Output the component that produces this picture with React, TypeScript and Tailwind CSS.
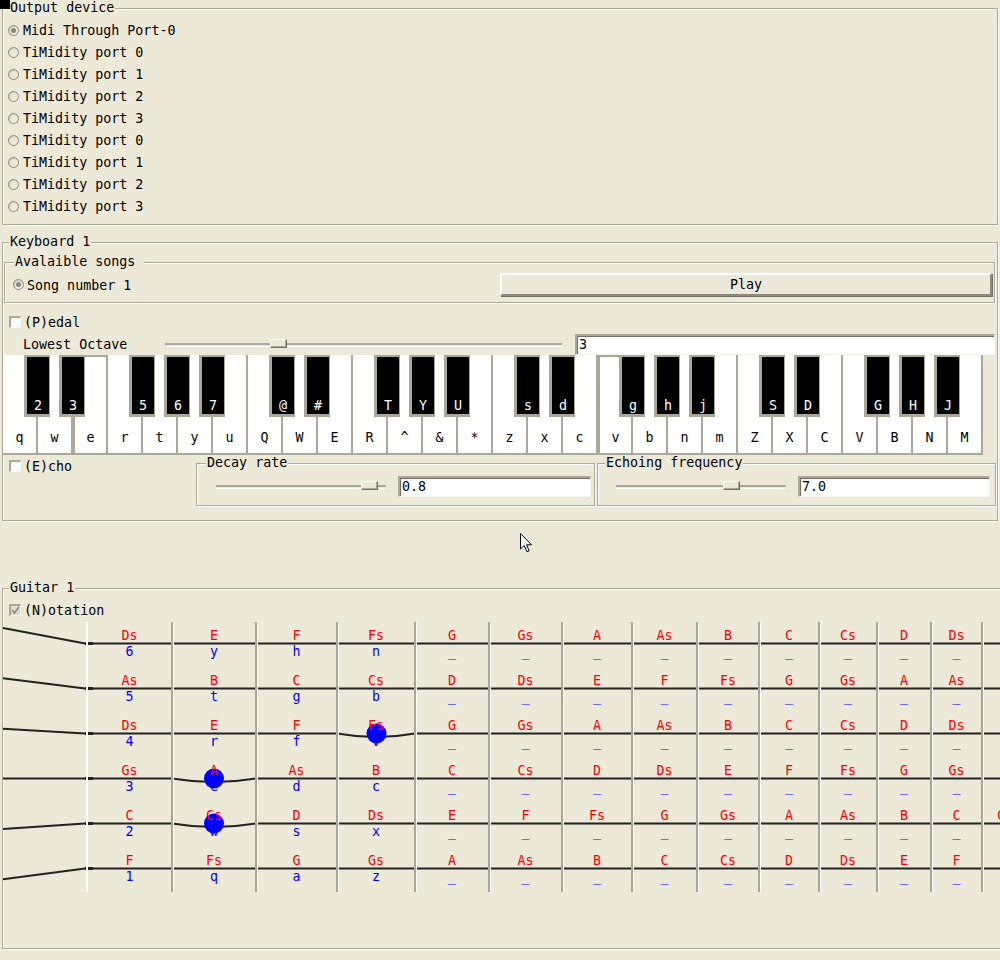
import React from "react";

const ports = [
  "Midi Through Port-0",
  "TiMidity port 0",
  "TiMidity port 1",
  "TiMidity port 2",
  "TiMidity port 3",
  "TiMidity port 0",
  "TiMidity port 1",
  "TiMidity port 2",
  "TiMidity port 3",
];

const whiteKeys = "q w e r t y u Q W E R ^ & * z x c v b n m Z X C V B N M".split(" ");
// boundary between white keys (px from piano left) and the label of the black key on it
const blackKeys: [number, string][] = [
  [35, "2"], [70, "3"], [140, "5"], [175, "6"], [210, "7"],
  [280, "@"], [315, "#"], [385, "T"], [420, "Y"], [455, "U"],
  [525, "s"], [560, "d"], [630, "g"], [665, "h"], [700, "j"],
  [770, "S"], [805, "D"], [875, "G"], [910, "H"], [945, "J"],
];

const scale = ["C", "Cs", "D", "Ds", "E", "F", "Fs", "G", "Gs", "A", "As", "B"];
const openNotes = [3, 10, 3, 8, 0, 5];
const keyCols = [
  ["6", "5", "4", "3", "2", "1"],
  ["y", "t", "r", "e", "w", "q"],
  ["h", "g", "f", "d", "s", "a"],
  ["n", "b", "v", "c", "x", "z"],
];
const fretWidths = ["w-[85px]", "w-[84px]", "w-[81px]", "w-[78px]", "w-[74px]", "w-[73px]", "w-[70px]", "w-[65px]", "w-[62px]", "w-[60px]", "w-[58px]", "w-[54px]", "w-[51px]", "w-[49px]"];

const Frame = ({
  label,
  className,
  labelClass = "left-[6px]",
  children,
}: {
  label: string;
  className: string;
  labelClass?: string;
  children?: React.ReactNode;
}) => (
  <div className={`relative border border-[#aca899] shadow-[inset_1px_1px_0_#fff,1px_1px_0_#fff] ${className}`}>
    <span className={`absolute -top-[9px] bg-[#ece9d8] px-[1px] leading-[16px] whitespace-pre ${labelClass}`}>{label}</span>
    {children}
  </div>
);

const Radio = ({ checked }: { checked?: boolean }) => (
  <span className="flex w-[11px] h-[11px] shrink-0 items-center justify-center rounded-full border border-[#8d8a7c] shadow-[inset_1px_1px_0_#cfcbbb]">
    {checked && <span className="w-[5px] h-[5px] rounded-full bg-[#8d8a7c]" />}
  </span>
);

const Check = ({ checked }: { checked?: boolean }) => (
  <span
    className={`flex w-[12px] h-[12px] shrink-0 items-center justify-center border-t-2 border-l-2 border-[#aca899] border-r border-b border-r-[#f6f5ee] border-b-[#f6f5ee] ${checked ? "bg-[#dedbcf]" : "bg-white"}`}
  >
    {checked && (
      <svg width="9" height="9" viewBox="0 0 9 9">
        <path d="M1 4 L3.5 7 L8 1" fill="none" stroke="#8d8a7c" strokeWidth="1.6" />
      </svg>
    )}
  </span>
);

const Entry = ({ value, className }: { value: string; className: string }) => (
  <div className={`h-[21px] bg-white border-t-2 border-l-2 border-[#aca899] border-r border-b border-r-[#f6f5ee] border-b-[#f6f5ee] shadow-[inset_1px_1px_0_#716f64] pl-[2px] leading-[18px] ${className}`}>
    {value}
  </div>
);

const Slider = ({ className, thumb }: { className: string; thumb: string }) => (
  <div className={`relative h-[4px] border-t-2 border-[#aca899] border-b border-b-white ${className}`}>
    <span className={`absolute -top-[6px] w-[17px] h-[9px] bg-[#ece9d8] border border-t-white border-l-white border-r-[#716f64] border-b-[#716f64] shadow-[inset_-1px_-1px_0_#aca899] ${thumb}`} />
  </div>
);

const Piano = () => (
  <div className="relative flex h-[100px] w-[980px]">
    {whiteKeys.map((k, i) => (
      <div
        key={i}
        className={`flex w-[35px] h-[100px] items-end justify-center bg-white border-r-2 border-b-2 border-[#aca899] pb-[7px] leading-[16px] ${
          i === 2 || i === 17 ? "border-t-2 border-l-2 border-t-[#aca899] border-l-[#aca899]" : ""
        }`}
      >
        {k}
      </div>
    ))}
    {blackKeys.map(([b, k]) => (
      <div
        key={b}
        className="absolute top-0 flex w-[26px] h-[62px] bg-[#aca899] pl-[3px] pr-[1px] pt-[2px] pb-[3px]"
        style={{ left: b - 14 }}
      >
        <div className="flex flex-1 items-end justify-center bg-black text-white leading-[16px]">{k}</div>
      </div>
    ))}
  </div>
);

const Strings = () => (
  <svg className="absolute left-0 top-0" width="1000" height="270">
    <g fill="none" stroke="#222" strokeWidth="2">
      <path d="M0 6 L82 21.5 H997" />
      <path d="M0 56.3 L82 66.5 H997" />
      <path d="M0 106.7 L82 111.5 H334 Q373.5 118.5 412 111.5 H997" />
      <path d="M0 156.5 H169 Q211 163.5 253 156.5 H997" />
      <path d="M0 207 L82 201.5 H169 Q211 208.5 253 201.5 H997" />
      <path d="M0 257.3 L82 246.5 H997" />
    </g>
    <g stroke="#222" strokeWidth="3">
      {[21.5, 66.5, 111.5, 156.5, 201.5, 246.5].map((y) => (
        <line key={y} x1="82" y1={y} x2="90" y2={y} />
      ))}
    </g>
    <g fill="#0000ff">
      <circle cx="373.5" cy="111.5" r="10" />
      <circle cx="211" cy="156.5" r="10" />
      <circle cx="211" cy="201.5" r="10" />
    </g>
  </svg>
);

const Fretboard = () => (
  <div className="relative h-[270px] w-[997px]">
    <Strings />
    <div className="relative flex h-[270px] pl-[83px]">
      {fretWidths.map((w, c) => (
        <div
          key={c}
          className={`flex h-[270px] shrink-0 flex-col border-l-2 ${w} ${c === 0 ? "border-white" : "border-[#a9a697] shadow-[inset_1px_0_0_#fff]"}`}
        >
          {c < 13 &&
            openNotes.map((o, r) => (
              <div key={r} className="flex h-[45px] flex-col items-center pt-[6px] leading-[16px]">
                <span className="text-[#ff0000]">{scale[(o + c) % 12]}</span>
                <span className="text-[#0000ff]">{c < 4 ? keyCols[c][r] : "_"}</span>
              </div>
            ))}
          {c === 13 && (
            <div className="mt-[186px] pl-[14px] leading-[16px] text-[#ff0000]">Cs</div>
          )}
        </div>
      ))}
    </div>
  </div>
);

export default function App() {
  return (
    <div className="relative flex h-[960px] w-[1000px] flex-col overflow-hidden bg-[#ece9d8] font-['DejaVu_Sans_Mono',monospace] text-[13.33px] text-black">
      <div className="absolute left-0 top-0 z-10 h-[9px] w-[10px] bg-black" />

      {/* Output device */}
      <Frame label="Output device" className="ml-[2px] mt-[8px] h-[217px] w-[996px] shrink-0">
        <div className="flex flex-col pl-[5px] pt-[10px]">
          {ports.map((p, i) => (
            <div key={i} className="flex h-[22px] items-center gap-[4px]">
              <Radio checked={i === 0} />
              <span className="pt-[2px] leading-[16px]">{p}</span>
            </div>
          ))}
        </div>
      </Frame>

      {/* Keyboard 1 */}
      <Frame label="Keyboard 1" className="ml-[2px] mt-[17px] flex h-[279px] w-[996px] shrink-0 flex-col">
        <Frame label="Avalaible songs " labelClass="left-[9px]" className="ml-[1px] mt-[19px] h-[41px] w-[991px] shrink-0">
          <div className="mt-[10px] flex h-[23px] items-center">
            <div className="ml-[8px] flex items-center gap-[3px]">
              <Radio checked />
              <span className="pt-[2px] leading-[16px]">Song number 1</span>
            </div>
            <button className="ml-auto mr-[2px] h-[23px] w-[492px] border-2 border-t-white border-l-white border-r-[#8d8a7c] border-b-[#8d8a7c] shadow-[1px_1px_0_#716f64] leading-[16px]">
              Play
            </button>
          </div>
        </Frame>

        <div className="ml-[6px] mt-[10px] flex h-[18px] items-center gap-[3px]">
          <Check />
          <span className="pt-[2px] leading-[16px]">(P)edal</span>
        </div>

        <div className="mt-[3px] flex h-[21px] items-center">
          <span className="w-[162px] pl-[20px] leading-[16px]">Lowest Octave</span>
          <Slider className="w-[397px]" thumb="left-[105px]" />
          <Entry value="3" className="ml-[13px] w-[420px]" />
        </div>

        <Piano />

        <div className="flex h-[50px]">
          <div className="w-[193px] pl-[6px] pt-[2px]">
            <div className="flex h-[18px] items-center gap-[3px]">
              <Check />
              <span className="pt-[2px] leading-[16px]">(E)cho</span>
            </div>
          </div>
          <Frame label="Decay rate" labelClass="left-[9px]" className="mt-[8px] h-[43px] w-[399px]">
            <div className="mt-[12px] flex items-center pl-[19px]">
              <Slider className="w-[170px]" thumb="left-[145px]" />
              <Entry value="0.8" className="ml-[12px] w-[193px]" />
            </div>
          </Frame>
          <Frame label="Echoing frequency" labelClass="left-[7px]" className="ml-[2px] mt-[8px] h-[43px] w-[399px]">
            <div className="mt-[12px] flex items-center pl-[18px]">
              <Slider className="w-[170px]" thumb="left-[107px]" />
              <Entry value="7.0" className="ml-[12px] w-[192px]" />
            </div>
          </Frame>
        </div>
      </Frame>

      {/* Guitar 1 */}
      <Frame label="Guitar 1" className="ml-[2px] mt-[67px] flex h-[361px] w-[1000px] shrink-0 flex-col">
        <div className="ml-[6px] mt-[12px] flex h-[18px] items-center gap-[3px]">
          <Check checked />
          <span className="pt-[2px] leading-[16px]">(N)otation</span>
        </div>
        <div className="mt-[3px]">
          <Fretboard />
        </div>
      </Frame>

      {/* mouse pointer */}
      <svg className="absolute left-[520px] top-[533px]" width="13" height="20" viewBox="0 0 13 20">
        <path d="M0.5 0.5 V16 L4.2 12.5 L7 18.8 L9.2 17.8 L6.5 11.8 H11.5 Z" fill="#fff" stroke="#000" strokeWidth="1" />
      </svg>
    </div>
  );
}
